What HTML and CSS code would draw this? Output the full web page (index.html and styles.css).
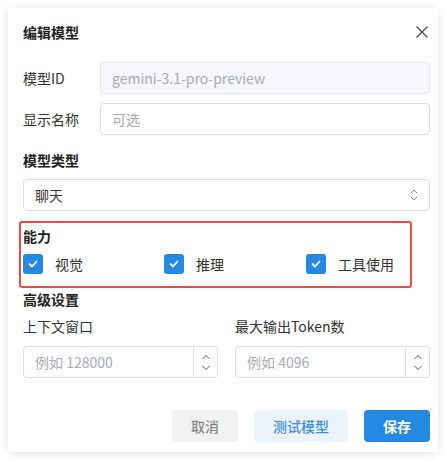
FILE: index.html
```html
<!DOCTYPE html>
<html lang="zh">
<head>
<meta charset="utf-8">
<link rel="stylesheet" href="styles.css">
</head>
<body>
<div class="dialog">
  <div class="header">
    <div class="title">编辑模型</div>
    <svg class="close" width="12" height="12" viewBox="0 0 12 12"><path d="M1 1L11 11M11 1L1 11" stroke="#4a4a4a" stroke-width="1.4" fill="none" stroke-linecap="round"/></svg>
  </div>
  <div class="row first">
    <div class="label">模型ID</div>
    <div class="input disabled">gemini-3.1-pro-preview</div>
  </div>
  <div class="row">
    <div class="label">显示名称</div>
    <div class="input placeholder">可选</div>
  </div>
  <div class="section-title type-title">模型类型</div>
  <div class="select">
    <span>聊天</span>
    <svg width="10" height="14" viewBox="0 0 10 14"><path d="M2 5L5 2L8 5M2 9L5 12L8 9" stroke="#8a8f96" stroke-width="1" fill="none"/></svg>
  </div>
  <div class="caps">
    <div class="section-title">能力</div>
    <div class="cap-grid">
      <label class="cap"><span class="box"><svg width="12" height="10" viewBox="0 0 12 10"><path d="M2.5 5L5 7.5L9.5 2.5" stroke="#fff" stroke-width="1.8" fill="none" stroke-linecap="round" stroke-linejoin="round"/></svg></span>视觉</label>
      <label class="cap"><span class="box"><svg width="12" height="10" viewBox="0 0 12 10"><path d="M2.5 5L5 7.5L9.5 2.5" stroke="#fff" stroke-width="1.8" fill="none" stroke-linecap="round" stroke-linejoin="round"/></svg></span>推理</label>
      <label class="cap"><span class="box"><svg width="12" height="10" viewBox="0 0 12 10"><path d="M2.5 5L5 7.5L9.5 2.5" stroke="#fff" stroke-width="1.8" fill="none" stroke-linecap="round" stroke-linejoin="round"/></svg></span>工具使用</label>
    </div>
  </div>
  <div class="section-title adv-title">高级设置</div>
  <div class="adv-grid">
    <div class="field">
      <div class="field-label">上下文窗口</div>
      <div class="num">
        <span class="num-text">例如 128000</span>
        <span class="spin">
          <svg width="10" height="6" viewBox="0 0 10 6"><path d="M1.5 5L5 1.5L8.5 5" stroke="#555" stroke-width="1" fill="none"/></svg>
          <svg width="10" height="6" viewBox="0 0 10 6"><path d="M1.5 1L5 4.5L8.5 1" stroke="#555" stroke-width="1" fill="none"/></svg>
        </span>
      </div>
    </div>
    <div class="field">
      <div class="field-label">最大输出Token数</div>
      <div class="num">
        <span class="num-text">例如 4096</span>
        <span class="spin">
          <svg width="10" height="6" viewBox="0 0 10 6"><path d="M1.5 5L5 1.5L8.5 5" stroke="#555" stroke-width="1" fill="none"/></svg>
          <svg width="10" height="6" viewBox="0 0 10 6"><path d="M1.5 1L5 4.5L8.5 1" stroke="#555" stroke-width="1" fill="none"/></svg>
        </span>
      </div>
    </div>
  </div>
  <div class="footer">
    <button class="btn cancel">取消</button>
    <button class="btn test">测试模型</button>
    <button class="btn save">保存</button>
  </div>
</div>
</body>
</html>
```
FILE: styles.css
```css
* { box-sizing: border-box; }
html, body { margin: 0; padding: 0; background: #fff; }
body {
  padding: 8px;
  font-family: "Noto Sans CJK SC", "Noto Sans", sans-serif;
  font-size: 14px;
  color: #333;
}
.dialog {
  width: 430px;
  height: 444px;
  background: #fff;
  border-radius: 2px;
  box-shadow: 0 1px 10px rgba(0, 0, 0, 0.12);
  padding: 14px 8px 10px 15px;
  display: flex;
  flex-direction: column;
}
.header {
  display: flex;
  align-items: center;
  justify-content: space-between;
  height: 20px;
  padding-right: 2px;
}
.title { font-weight: 700; line-height: 20px; color: #222; }
.row {
  display: flex;
  align-items: center;
  margin-top: 9px;
}
.row.first { margin-top: 20px; }
.label { width: 77px; flex: none; line-height: 20px; color: #333; }
.input {
  flex: 1;
  height: 32px;
  border: 1px solid #dcdfe6;
  border-radius: 4px;
  padding: 0 11px;
  display: flex;
  align-items: center;
  color: #a8abb2;
}
.input.disabled { background: #f5f7fa; border-color: #e4e7ed; }
.section-title { font-weight: 700; line-height: 20px; color: #222; }
.type-title { margin-top: 15px; }
.select {
  margin-top: 9px;
  height: 32px;
  border: 1px solid #dcdfe6;
  border-radius: 4px;
  padding: 0 10px 0 11px;
  display: flex;
  align-items: center;
  justify-content: space-between;
  color: #333;
}
.caps {
  margin: 10px 18px 0 -4px;
  border: 2px solid #f04848;
  border-radius: 3px;
  padding: 3px 2px 4px 2px;
  height: 67px;
}
.cap-grid {
  display: grid;
  grid-template-columns: 141px 142px auto;
  margin-top: 8px;
}
.cap { display: flex; align-items: center; line-height: 20px; color: #333; }
.box {
  width: 20px;
  height: 20px;
  border-radius: 3px;
  background: #2389e3;
  display: flex;
  align-items: center;
  justify-content: center;
  margin-right: 12px;
}
.adv-title { margin-top: 1px; }
.adv-grid {
  display: grid;
  grid-template-columns: 1fr 1fr;
  column-gap: 17px;
  margin-top: 7px;
}
.field-label { line-height: 20px; color: #333; }
.num {
  margin-top: 10px;
  height: 32px;
  border: 1px solid #dcdfe6;
  border-radius: 4px;
  display: flex;
  align-items: stretch;
}
.num-text { flex: 1; display: flex; align-items: center; padding-left: 11px; color: #a8abb2; }
.spin {
  width: 24px;
  border-left: 1px solid #dcdfe6;
  display: flex;
  flex-direction: column;
  align-items: center;
  justify-content: space-around;
  padding: 4px 0;
}
.footer {
  margin-top: auto;
  display: flex;
  justify-content: flex-end;
  gap: 16px;
}
.btn {
  height: 32px;
  border: none;
  border-radius: 4px;
  font-family: inherit;
  font-size: 14px;
  font-weight: 500;
  padding: 0;
}
.cancel { width: 66px; background: #f2f2f2; color: #888; }
.test { width: 94px; background: #ebf4fd; color: #3d8fe0; }
.save { width: 66px; background: #2389e3; color: #fff; font-weight: 700; }
```
